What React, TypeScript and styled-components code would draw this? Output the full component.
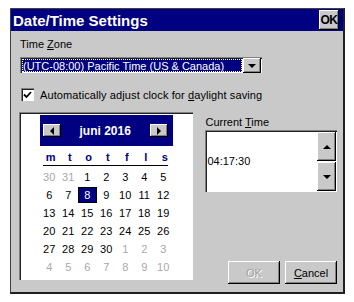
import React from "react";
import styled, { createGlobalStyle, css } from "styled-components";

const GlobalStyle = createGlobalStyle`
  html, body {
    margin: 0;
    padding: 0;
    background: #ffffff;
  }
  body {
    font-family: "Liberation Sans", Arial, sans-serif;
    font-size: 11px;
    color: #000;
  }
`;

const gray = "#c9c9c9";
const navy = "#000080";

const raised = css`
  background: ${gray};
  box-shadow: inset -1px -1px #000000, inset 1px 1px #ffffff,
    inset -2px -2px #808080;
`;

const sunken = css`
  box-shadow: inset 1px 1px #808080, inset 2px 2px #202020,
    inset -1px -1px #ffffff;
`;

const Screen = styled.div`
  width: 354px;
  height: 302px;
  padding: 8px 9px 8px 10px;
  box-sizing: border-box;
`;

const Window = styled.div`
  width: 335px;
  height: 286px;
  box-sizing: border-box;
  background: ${gray};
  border: 1px solid #404040;
  border-right: 2px solid #202020;
  border-bottom: 2px solid #202020;
  display: flex;
  flex-direction: column;
`;

const TitleBar = styled.div`
  height: 22px;
  background: ${navy};
  display: flex;
  align-items: center;
  justify-content: space-between;
  padding: 0 4px 0 2px;
`;

const Title = styled.div`
  color: #fff;
  font-weight: 700;
  font-size: 15px;
`;

const TitleOk = styled.div`
  ${raised};
  width: 20px;
  height: 20px;
  display: flex;
  align-items: center;
  justify-content: center;
  font-weight: 700;
  font-size: 12px;
  letter-spacing: -0.5px;
`;

const Body = styled.div`
  flex: 1;
  display: flex;
  flex-direction: column;
  padding: 7px 6px 0 9px;
`;

const Label = styled.div`
  line-height: 13px;
  height: 13px;
`;

const U = styled.span`
  text-decoration: underline;
`;

const Combo = styled.div`
  margin-top: 6px;
  width: 242px;
  height: 16px;
  display: flex;
  align-items: stretch;
  background: #fff;
  box-sizing: border-box;
  ${sunken};
  padding: 2px 1px 1px 2px;
  gap: 1px;
`;

const ComboText = styled.div`
  flex: 1;
  background: ${navy};
  color: #fff;
  outline: 1px dotted #ffffff;
  outline-offset: -1px;
  display: flex;
  align-items: center;
  padding-left: 1px;
  white-space: nowrap;
  overflow: hidden;
  font-size: 11px;
`;

const DropButton = styled.div`
  ${raised};
  width: 18px;
  display: flex;
  align-items: center;
  justify-content: center;
  margin-top: -1px;
  margin-bottom: -1px;
`;

const CheckRow = styled.div`
  margin-top: 15px;
  display: flex;
  align-items: center;
  gap: 6px;
  padding-left: 1px;
  height: 13px;
  letter-spacing: 0.1px;
`;

const CheckBox = styled.div`
  width: 13px;
  height: 13px;
  box-sizing: border-box;
  background: #fff;
  ${sunken};
  display: flex;
  align-items: center;
  justify-content: center;
`;

const MainRow = styled.div`
  margin-top: 11px;
  display: flex;
  gap: 12px;
  margin-left: -1px;
`;

const CalendarPanel = styled.div`
  width: 175px;
  height: 168px;
  box-sizing: border-box;
  background: #fff;
  ${sunken};
  display: flex;
  justify-content: center;
  padding-top: 3px;
`;

const Calendar = styled.div`
  width: 133px;
  display: flex;
  flex-direction: column;
`;

const CalHeader = styled.div`
  height: 31px;
  background: ${navy};
  display: flex;
  align-items: center;
  justify-content: space-between;
  padding: 0 5px 0 3px;
  color: #fff;
  font-weight: 700;
  font-size: 12px;
`;

const NavButton = styled.div`
  ${raised};
  width: 18px;
  height: 13px;
  display: flex;
  align-items: center;
  justify-content: center;
`;

const DayNames = styled.div`
  display: grid;
  grid-template-columns: repeat(7, 19px);
  height: 16px;
  margin-top: 3px;
  align-items: center;
  border-bottom: 1px solid #000;
  margin-left: 3px;
  margin-right: 5px;
  margin-bottom: 2px;
`;

const DayName = styled.div`
  text-align: center;
  color: ${navy};
  font-weight: 700;
  font-size: 11px;
  margin-left: -3px;
`;

const Dates = styled.div`
  display: grid;
  grid-template-columns: repeat(7, 19px);
  grid-auto-rows: 18px;
`;

const DateCell = styled.div<{ $muted?: boolean; $selected?: boolean }>`
  display: flex;
  align-items: center;
  justify-content: center;
  font-size: 11px;
  color: ${(p) => (p.$muted ? "#a8a8a8" : "#000")};
  ${(p) =>
    p.$selected &&
    css`
      background: ${navy};
      color: #fff;
      border: 1px solid #000;
      box-sizing: border-box;
      height: 16px;
      margin-top: 1px;
    `}
`;

const RightColumn = styled.div`
  width: 132px;
  display: flex;
  flex-direction: column;
  padding-top: 4px;
`;

const TimeBox = styled.div`
  margin-top: 1px;
  height: 62px;
  box-sizing: border-box;
  background: #fff;
  ${sunken};
  display: flex;
  padding: 2px 1px 1px 2px;
`;

const TimeText = styled.div`
  flex: 1;
  display: flex;
  align-items: center;
  font-size: 11px;
  padding-bottom: 2px;
`;

const Spinner = styled.div`
  width: 19px;
  display: flex;
  flex-direction: column;
  gap: 1px;
`;

const SpinButton = styled.div`
  ${raised};
  flex: 1;
  display: flex;
  align-items: center;
  justify-content: center;
`;

const ButtonRow = styled.div`
  margin-top: auto;
  display: flex;
  justify-content: flex-end;
  gap: 5px;
  margin-bottom: -4px;
`;

const PushButton = styled.div<{ $disabled?: boolean }>`
  ${raised};
  width: 52px;
  height: 23px;
  display: flex;
  align-items: center;
  justify-content: center;
  font-size: 11px;
  color: ${(p) => (p.$disabled ? "#a0a0a0" : "#000")};
  text-shadow: ${(p) => (p.$disabled ? "1px 1px #ffffff" : "none")};
`;

const Tri = ({ dir }: { dir: "up" | "down" | "left" | "right" }) => {
  const pts = {
    down: "0,0 8,0 4,4",
    up: "0,4 8,4 4,0",
    left: "4,0 4,8 0,4",
    right: "0,0 0,8 4,4",
  }[dir];
  const w = dir === "up" || dir === "down" ? 8 : 4;
  const h = dir === "up" || dir === "down" ? 4 : 8;
  return (
    <svg width={w} height={h} viewBox={`0 0 ${w} ${h}`}>
      <polygon points={pts} fill="#000" />
    </svg>
  );
};

type Day = { n: number; muted?: boolean; selected?: boolean };

const weeks: Day[][] = [
  [{ n: 30, muted: true }, { n: 31, muted: true }, { n: 1 }, { n: 2 }, { n: 3 }, { n: 4 }, { n: 5 }],
  [{ n: 6 }, { n: 7 }, { n: 8, selected: true }, { n: 9 }, { n: 10 }, { n: 11 }, { n: 12 }],
  [{ n: 13 }, { n: 14 }, { n: 15 }, { n: 16 }, { n: 17 }, { n: 18 }, { n: 19 }],
  [{ n: 20 }, { n: 21 }, { n: 22 }, { n: 23 }, { n: 24 }, { n: 25 }, { n: 26 }],
  [{ n: 27 }, { n: 28 }, { n: 29 }, { n: 30 }, { n: 1, muted: true }, { n: 2, muted: true }, { n: 3, muted: true }],
  [4, 5, 6, 7, 8, 9, 10].map((n) => ({ n, muted: true })),
];

export default function App() {
  return (
    <Screen>
      <GlobalStyle />
      <Window>
        <TitleBar>
          <Title>Date/Time Settings</Title>
          <TitleOk>OK</TitleOk>
        </TitleBar>
        <Body>
          <Label>
            Time <U>Z</U>one
          </Label>
          <Combo>
            <ComboText>(UTC-08:00) Pacific Time (US &amp; Canada)</ComboText>
            <DropButton>
              <Tri dir="down" />
            </DropButton>
          </Combo>
          <CheckRow>
            <CheckBox>
              <svg width="9" height="8" viewBox="0 0 9 8">
                <path d="M1 3.5 L3.5 6 L8 1" stroke="#000" strokeWidth="1.8" fill="none" />
              </svg>
            </CheckBox>
            <span>
              Automatically adjust clock for <U>d</U>aylight saving
            </span>
          </CheckRow>
          <MainRow>
            <CalendarPanel>
              <Calendar>
                <CalHeader>
                  <NavButton>
                    <Tri dir="left" />
                  </NavButton>
                  <span>juni 2016</span>
                  <NavButton>
                    <Tri dir="right" />
                  </NavButton>
                </CalHeader>
                <DayNames>
                  {["m", "t", "o", "t", "f", "l", "s"].map((d, i) => (
                    <DayName key={i}>{d}</DayName>
                  ))}
                </DayNames>
                <Dates>
                  {weeks.flat().map((d, i) => (
                    <DateCell key={i} $muted={d.muted} $selected={d.selected}>
                      {d.n}
                    </DateCell>
                  ))}
                </Dates>
              </Calendar>
            </CalendarPanel>
            <RightColumn>
              <Label>
                Current <U>T</U>ime
              </Label>
              <TimeBox>
                <TimeText>04:17:30</TimeText>
                <Spinner>
                  <SpinButton>
                    <Tri dir="up" />
                  </SpinButton>
                  <SpinButton>
                    <Tri dir="down" />
                  </SpinButton>
                </Spinner>
              </TimeBox>
              <ButtonRow>
                <PushButton $disabled>OK</PushButton>
                <PushButton>
                  <span>
                    <U>C</U>ancel
                  </span>
                </PushButton>
              </ButtonRow>
            </RightColumn>
          </MainRow>
        </Body>
      </Window>
    </Screen>
  );
}
